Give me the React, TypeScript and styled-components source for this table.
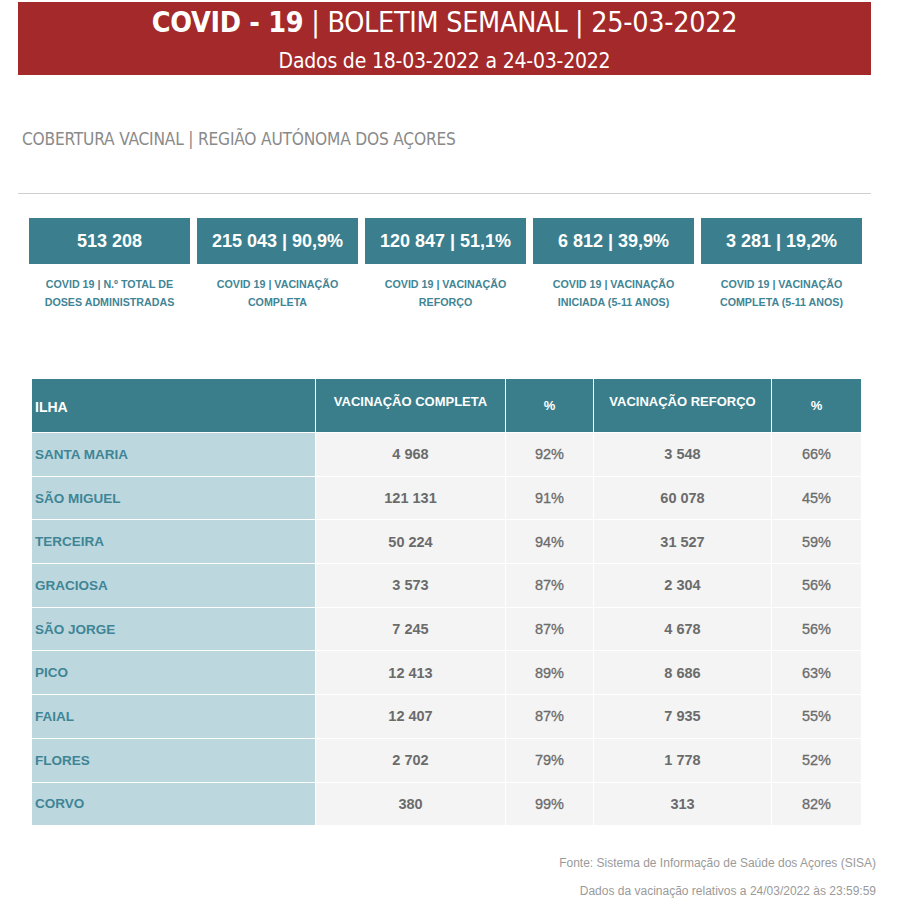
import React from "react";
import styled, { createGlobalStyle } from "styled-components";

const Global = createGlobalStyle`
  html, body { margin: 0; padding: 0; background: #ffffff; }
  body { font-family: "Liberation Sans", Arial, sans-serif; }
`;

const Page = styled.div`
  width: 897px;
  padding-top: 2px;
`;

const Banner = styled.header`
  margin-left: 18px;
  width: 853px;
  height: 73px;
  background: #a3292b;
  color: #ffffff;
  display: flex;
  flex-direction: column;
  align-items: center;
  font-family: "DejaVu Sans Condensed", "Liberation Sans Narrow", "Open Sans", sans-serif;
  font-stretch: condensed;
`;

const Title = styled.h1`
  margin: 4px 0 0 0;
  font-size: 28.5px;
  font-weight: 400;
  line-height: 34px;
  letter-spacing: -0.3px;
  b { font-weight: 700; }
`;

const Subtitle = styled.div`
  font-size: 21px;
  line-height: 26px;
  margin-top: 8px;
  letter-spacing: -0.2px;
`;

const SectionTitle = styled.h2`
  margin: 53px 0 0 22px;
  font-family: "DejaVu Sans Condensed", "Liberation Sans Narrow", "Open Sans", sans-serif;
  font-stretch: condensed;
  font-size: 17.2px;
  font-weight: 400;
  line-height: 22px;
  color: #8a8a8a;
  letter-spacing: -0.2px;
`;

const Divider = styled.hr`
  margin: 43px 0 0 18px;
  width: 853px;
  border: none;
  border-top: 1px solid #cfcfcf;
  height: 0;
`;

const Cards = styled.div`
  display: flex;
  gap: 7px;
  margin: 24px 0 0 29px;
`;

const Card = styled.div`
  width: 161px;
  display: flex;
  flex-direction: column;
  align-items: center;
`;

const CardValue = styled.div`
  width: 100%;
  height: 46px;
  background: #3b7f8e;
  color: #ffffff;
  font-size: 18px;
  font-weight: 700;
  display: flex;
  align-items: center;
  justify-content: center;
`;

const CardLabel = styled.div`
  margin-top: 11px;
  font-size: 10.7px;
  font-weight: 700;
  line-height: 18px;
  color: #3f8595;
  text-align: center;
  white-space: pre-line;
`;

const Table = styled.div`
  margin: 68px 0 0 32px;
  width: 829px;
  display: grid;
  grid-template-columns: 283px 189px 87px 177px 89px;
  column-gap: 1px;
  row-gap: 1px;
`;

const HeadCell = styled.div<{ $first?: boolean; $top?: boolean }>`
  height: 53px;
  box-sizing: border-box;
  background: #3a7e8c;
  color: #ffffff;
  font-size: ${(p) => (p.$first ? "14px" : "13px")};
  font-weight: 700;
  display: flex;
  align-items: ${(p) => (p.$top ? "flex-start" : "center")};
  justify-content: ${(p) => (p.$first ? "flex-start" : "center")};
  padding-left: ${(p) => (p.$first ? "3px" : "0")};
  padding-top: ${(p) => (p.$top ? "15px" : p.$first ? "2px" : "0")};
`;

const NameCell = styled.div`
  height: 42.7px;
  background: #bcd7de;
  color: #3f8595;
  font-size: 13.5px;
  font-weight: 700;
  display: flex;
  align-items: center;
  padding-left: 3px;
`;

const NumCell = styled.div<{ $pct?: boolean }>`
  height: 42.7px;
  background: #f4f4f4;
  color: #6b6b6b;
  font-size: 14.5px;
  font-weight: ${(p) => (p.$pct ? 400 : 700)};
  ${(p) => (p.$pct ? "-webkit-text-stroke: 0.3px #6b6b6b;" : "")}
  display: flex;
  align-items: center;
  justify-content: center;
`;

const Footer = styled.div`
  width: 876px;
  margin-top: 24px;
  text-align: right;
  font-size: 12px;
  line-height: 28px;
  color: #9a9a9a;
`;

const cards = [
  { v: "513 208", l: "COVID 19 | N.º TOTAL DE\nDOSES ADMINISTRADAS" },
  { v: "215 043 | 90,9%", l: "COVID 19 | VACINAÇÃO\nCOMPLETA" },
  { v: "120 847 | 51,1%", l: "COVID 19 | VACINAÇÃO\nREFORÇO" },
  { v: "6 812 | 39,9%", l: "COVID 19 | VACINAÇÃO\nINICIADA (5-11 ANOS)" },
  { v: "3 281 | 19,2%", l: "COVID 19 | VACINAÇÃO\nCOMPLETA (5-11 ANOS)" },
];

const rows: [string, string, string, string, string][] = [
  ["SANTA MARIA", "4 968", "92%", "3 548", "66%"],
  ["SÃO MIGUEL", "121 131", "91%", "60 078", "45%"],
  ["TERCEIRA", "50 224", "94%", "31 527", "59%"],
  ["GRACIOSA", "3 573", "87%", "2 304", "56%"],
  ["SÃO JORGE", "7 245", "87%", "4 678", "56%"],
  ["PICO", "12 413", "89%", "8 686", "63%"],
  ["FAIAL", "12 407", "87%", "7 935", "55%"],
  ["FLORES", "2 702", "79%", "1 778", "52%"],
  ["CORVO", "380", "99%", "313", "82%"],
];

export default function App() {
  return (
    <Page>
      <Global />
      <Banner>
        <Title>
          <b>COVID - 19</b> | BOLETIM SEMANAL | 25-03-2022
        </Title>
        <Subtitle>Dados de 18-03-2022 a 24-03-2022</Subtitle>
      </Banner>
      <SectionTitle>COBERTURA VACINAL | REGIÃO AUTÓNOMA DOS AÇORES</SectionTitle>
      <Divider />
      <Cards>
        {cards.map((c) => (
          <Card key={c.v}>
            <CardValue>{c.v}</CardValue>
            <CardLabel>{c.l}</CardLabel>
          </Card>
        ))}
      </Cards>
      <Table>
        <HeadCell $first>ILHA</HeadCell>
        <HeadCell $top>VACINAÇÃO COMPLETA</HeadCell>
        <HeadCell>%</HeadCell>
        <HeadCell $top>VACINAÇÃO REFORÇO</HeadCell>
        <HeadCell>%</HeadCell>
        {rows.map((r) => (
          <React.Fragment key={r[0]}>
            <NameCell>{r[0]}</NameCell>
            <NumCell>{r[1]}</NumCell>
            <NumCell $pct>{r[2]}</NumCell>
            <NumCell>{r[3]}</NumCell>
            <NumCell $pct>{r[4]}</NumCell>
          </React.Fragment>
        ))}
      </Table>
      <Footer>
        <div>Fonte: Sistema de Informação de Saúde dos Açores (SISA)</div>
        <div>Dados da vacinação relativos a 24/03/2022 às 23:59:59</div>
      </Footer>
    </Page>
  );
}
